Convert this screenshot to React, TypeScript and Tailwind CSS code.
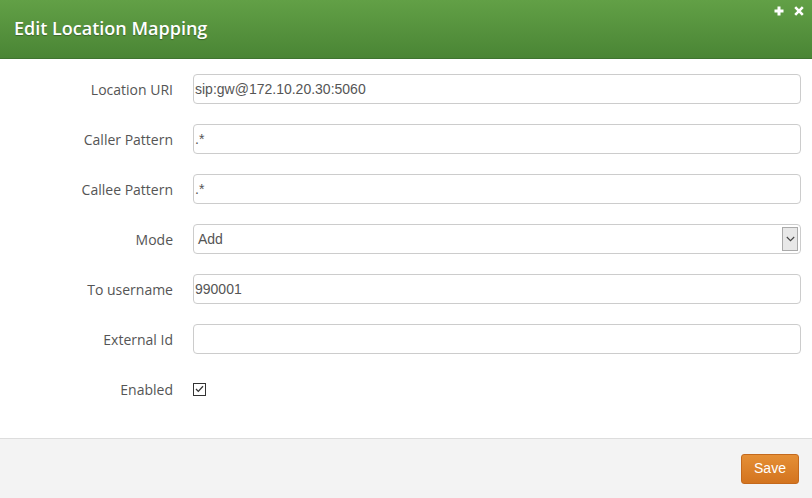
const fields = [
  { label: 'Location URI', value: 'sip:gw@172.10.20.30:5060' },
  { label: 'Caller Pattern', value: '.*' },
  { label: 'Callee Pattern', value: '.*' },
];

const moreFields = [
  { label: 'To username', value: '990001' },
  { label: 'External Id', value: '' },
];

function Label({ text }: { text: string }) {
  return (
    <div className="w-[173px] shrink-0 pr-0 text-right text-[14px] text-[#555] font-['Open_Sans',sans-serif]">
      {text}
    </div>
  );
}

function TextRow({ label, value }: { label: string; value: string }) {
  return (
    <div className="flex h-[50px] items-center gap-[20px]">
      <Label text={label} />
      <div className="flex h-[30px] w-[608px] items-center rounded-[4px] border border-[#ccc] bg-white pl-[1px] text-[14px] text-[#555] font-['Liberation_Sans',Arial,sans-serif]">
        {value}
      </div>
    </div>
  );
}

export default function App() {
  return (
    <div className="flex h-[498px] w-[812px] flex-col bg-white">
      <div className="relative flex h-[59px] shrink-0 items-center border-b border-[#3f7430] bg-gradient-to-b from-[#62a046] to-[#4a8535] px-[14px] pb-[2px]">
        <h1 className="text-[18px] font-semibold text-white font-['Open_Sans',sans-serif] [text-shadow:0_1px_1px_rgba(0,0,0,0.3)]">
          Edit Location Mapping
        </h1>
        <div className="absolute right-[8px] top-[6px] flex items-center gap-[10px]">
          <svg width="10" height="10" viewBox="0 0 10 10">
            <path d="M5 0.5v9M0.5 5h9" stroke="white" strokeWidth="3" />
          </svg>
          <svg width="10" height="10" viewBox="0 0 10 10">
            <path d="M1.2 1.2l7.6 7.6M8.8 1.2l-7.6 7.6" stroke="white" strokeWidth="2.6" />
          </svg>
        </div>
      </div>

      <div className="flex flex-1 flex-col pt-[5px]">
        {fields.map((f) => (
          <TextRow key={f.label} label={f.label} value={f.value} />
        ))}
        <div className="flex h-[50px] items-center gap-[20px]">
          <Label text="Mode" />
          <div className="flex h-[30px] w-[608px] items-center justify-between rounded-[4px] border border-[#ccc] bg-white pl-[4px] text-[14px] text-[#555] font-['Liberation_Sans',Arial,sans-serif]">
            <span>Add</span>
            <div className="mr-[2px] flex h-[24px] w-[16px] items-center justify-center border border-[#aaa] bg-[#e8e8e8]">
              <svg width="9" height="6" viewBox="0 0 9 6">
                <path d="M0.8 1l3.7 3.7L8.2 1" stroke="#444" strokeWidth="1.1" fill="none" />
              </svg>
            </div>
          </div>
        </div>
        {moreFields.map((f) => (
          <TextRow key={f.label} label={f.label} value={f.value} />
        ))}
        <div className="flex h-[50px] items-center gap-[20px]">
          <Label text="Enabled" />
          <div className="flex h-[13px] w-[13px] items-center justify-center border border-[#333] bg-white">
            <svg width="9" height="8" viewBox="0 0 9 8">
              <path d="M1 4l2.3 2.4L8 1.2" stroke="#333" strokeWidth="1.3" fill="none" />
            </svg>
          </div>
        </div>
      </div>

      <div className="flex h-[60px] shrink-0 items-center justify-end border-t border-[#ddd] bg-[#f3f3f3] pr-[13px]">
        <button className="h-[30px] w-[58px] rounded-[3px] border border-[#c4691c] bg-gradient-to-b from-[#e58f35] to-[#d3741f] text-[14px] text-white font-['Liberation_Sans',Arial,sans-serif]">
          Save
        </button>
      </div>
    </div>
  );
}
